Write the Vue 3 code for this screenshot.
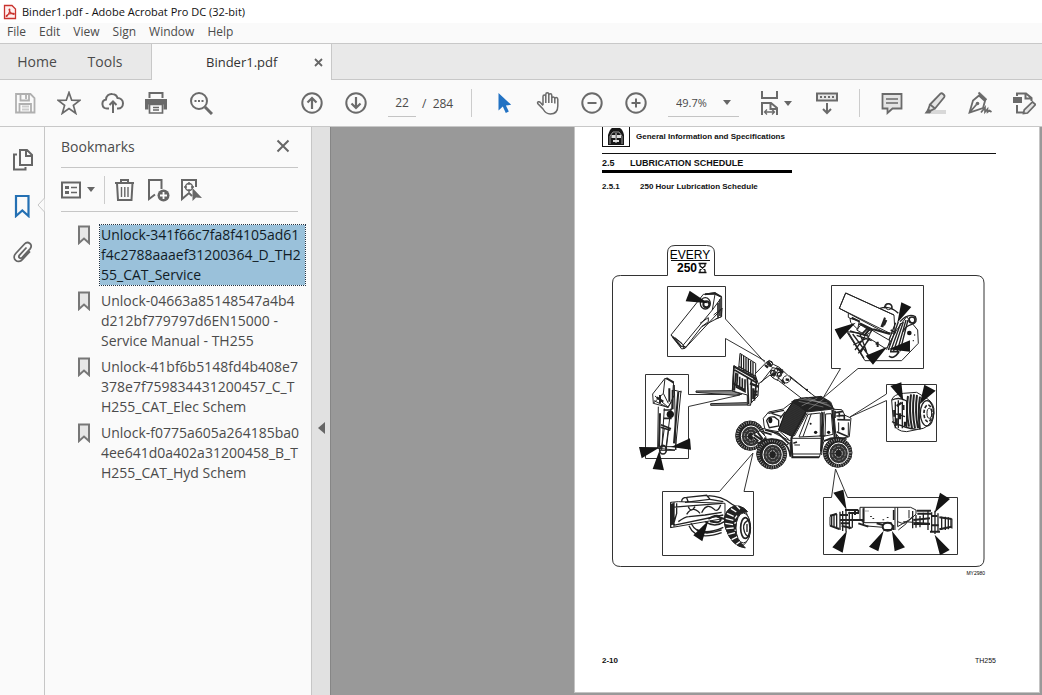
<script setup>
import { ref } from 'vue'

const menus = ['File', 'Edit', 'View', 'Sign', 'Window', 'Help']
const page = ref('22')
const zoom = ref('49.7%')
const selected = ref(0)
const bookmarks = [
  ['Unlock-341f66c7fa8f4105ad61', 'f4c2788aaaef31200364_D_TH2', '55_CAT_Service'],
  ['Unlock-04663a85148547a4b4', 'd212bf779797d6EN15000 -', 'Service Manual - TH255'],
  ['Unlock-41bf6b5148fd4b408e7', '378e7f759834431200457_C_T', 'H255_CAT_Elec Schem'],
  ['Unlock-f0775a605a264185ba0', '4ee641d0a402a31200458_B_T', 'H255_CAT_Hyd Schem']
]
const wheels = [
  { x: 180, y: 287, rx: 39, ry: 40 },
  { x: 245, y: 342, rx: 41, ry: 41 },
  { x: 443, y: 338, rx: 39, ry: 40 }
]
</script>

<template>
  <div class="app">
    <header class="titlebar">
      <svg class="logo" width="14" height="16" viewBox="0 0 14 16" aria-hidden="true">
        <path d="M1.5 1.5h7.500l3.500 3.500v9.500h-11z" fill="#fff0ef" stroke="#c9332e" stroke-width="1.300" />
        <path d="M6.500 5c-1.500 0 .8 4.500 3.700 5.300 1.500.4 1.500-.8 0-.9-2.300-.1-5.500.8-6.800 2.200-.8 1 .3 1.400 1 .2C5.600 10.200 7.700 5.300 6.500 5z" fill="none" stroke="#c9332e" stroke-width="1.100" />
      </svg>
      <span>Binder1.pdf - Adobe Acrobat Pro DC (32-bit)</span>
    </header>

    <nav class="menubar" aria-label="Menu">
      <button v-for="m in menus" :key="m" type="button">{{ m }}</button>
    </nav>

    <div class="tabs">
      <button type="button" class="tab home">Home</button>
      <button type="button" class="tab tools">Tools</button>
      <div class="doc-tab">
        <button type="button" class="doc-name">Binder1.pdf</button>
        <button type="button" class="close-tab" aria-label="Close tab">
          <svg width="9" height="9" viewBox="0 0 9 9"><path d="M1 1l7 7M8 1l-7 7" stroke="#666" stroke-width="1.800" /></svg>
        </button>
      </div>
    </div>

    <div class="toolbar">
      <div class="group">
        <button type="button" class="tool" aria-label="Save">
          <svg viewBox="0 0 24 24" class="ico pale">
            <path d="M3 3h14.500l4 4v14.500h-18.500zM7.500 3v6.500h8.500v-6.500M13 4v4M6.500 21v-8h11.500v8" />
            <path d="M9 15.500h7M9 18.500h7" class="thin" />
          </svg>
        </button>
        <button type="button" class="tool" aria-label="Star">
          <svg viewBox="0 0 24 24" class="ico"><path d="M12 1.500l2.700 7.700 8.100.2-6.400 5 2.300 7.900-6.700-4.700-6.700 4.700 2.300-7.900-6.400-5 8.100-.2z" stroke-width="1.700" /></svg>
        </button>
        <button type="button" class="tool" aria-label="Upload">
          <svg viewBox="0 0 24 24" class="ico"><path d="M8 17.500H6a4.500 4.500 0 0 1-1-8.900c0-3.600 3-6 6.300-5.600 2.600.2 4.500 1.600 5.200 4 3 .1 5.500 2 5.500 5.200 0 3-2 5.300-5 5.300h-1M12 22V10.500M8.500 14l3.500-3.500 3.500 3.500" stroke-width="2" /></svg>
        </button>
        <button type="button" class="tool" aria-label="Print">
          <svg viewBox="0 0 24 24" class="ico">
            <path d="M4.500 7V2h13v5" />
            <path d="M0 8h22v10.500h-3.500v-5h-15v5H0z" fill="#6a6a6a" stroke="none" />
            <path d="M4.500 13.500h13v8.500h-13zM8 16.500h6M8 19h6" stroke-width="1.700" />
          </svg>
        </button>
        <button type="button" class="tool" aria-label="Search">
          <svg viewBox="0 0 24 24" class="ico">
            <circle cx="10" cy="10" r="8" />
            <path d="M16 16l7 7" stroke-width="3" />
            <path d="M5.500 10h2M9 10h2M12.500 10h2" />
          </svg>
        </button>
      </div>

      <div class="group nav">
        <button type="button" class="tool" aria-label="Previous page">
          <svg viewBox="0 0 24 24" class="ico"><circle cx="12" cy="12" r="9.700" /><path d="M12 18V7M7.500 11.500L12 7l4.500 4.500" stroke-width="2.200" /></svg>
        </button>
        <button type="button" class="tool" aria-label="Next page">
          <svg viewBox="0 0 24 24" class="ico"><circle cx="12" cy="12" r="9.700" /><path d="M12 6v11M7.500 12.500L12 17l4.500-4.500" stroke-width="2.200" /></svg>
        </button>
      </div>
      <label class="pages"><input v-model="page" aria-label="Page number"><span>/&nbsp; 284</span></label>
      <span class="rule"></span>

      <div class="group view">
        <button type="button" class="tool" aria-label="Select">
          <svg viewBox="0 0 24 24" class="ico"><path d="M6.500 2v17.500l4.300-3.900 3 6.300 3-1.400-2.900-6 5.300-.7z" fill="#2272c3" stroke="none" /></svg>
        </button>
        <button type="button" class="tool" aria-label="Pan">
          <svg viewBox="0 0 24 24" class="ico"><path d="M7 14V5.500c0-2 2.800-2 2.800 0v-2c0-2.300 3-2.300 3 0v2-1c0-2.200 3-2.200 3 0v3c0-2 3-2 3 .2V8c0-2 3-1.800 3 .2V15c0 5-2.500 8-7.500 8-4 0-5.600-2-7.300-5L1.700 12.500c-.7-1.700 1.500-2.500 2.700-1L7 14.500M9.800 5.500V12M12.800 4v8M15.800 5v7M18.800 8v4.500" stroke-width="1.500" /></svg>
        </button>
        <button type="button" class="tool" aria-label="Zoom out">
          <svg viewBox="0 0 24 24" class="ico"><circle cx="12" cy="12" r="9.700" /><path d="M7.500 12h9" /></svg>
        </button>
        <button type="button" class="tool" aria-label="Zoom in">
          <svg viewBox="0 0 24 24" class="ico"><circle cx="12" cy="12" r="9.700" /><path d="M7.500 12h9M12 7.500v9" /></svg>
        </button>
      </div>
      <label class="zoom">
        <select v-model="zoom" aria-label="Zoom level"><option>49.7%</option><option>100%</option></select>
        <svg width="8" height="5" viewBox="0 0 8 5"><path d="M0 0h8L4 5z" fill="#666" /></svg>
      </label>
      <button type="button" class="fit" aria-label="Fit width">
        <svg viewBox="0 0 24 28" width="24" height="28" class="fit-ico">
          <path d="M4 2v7h15V2M4 26V14h9l6 5v7M12.500 14v6H19" />
          <path d="M7 23h9M9 20.500L6.500 23 9 25.500M14 20.500l2.500 2.500-2.500 2.500" class="thin" />
        </svg>
        <svg width="8" height="5" viewBox="0 0 8 5"><path d="M0 0h8L4 5z" fill="#666" /></svg>
      </button>
      <button type="button" class="tool keys" aria-label="Scroll mode">
        <svg viewBox="0 0 24 24" class="ico">
          <path d="M2 2.500h20v7H2z" fill="#e7e7e7" />
          <path d="M5 6h2M9 6h2M13 6h2M17 6h2M12 12v10M8 18l4 4 4-4" />
        </svg>
      </button>
      <span class="rule"></span>
      <div class="group comment">
        <button type="button" class="tool" aria-label="Comment">
          <svg viewBox="0 0 24 24" class="ico"><path d="M2.500 3h19v14.500h-9L7.500 22v-4.500h-5z" fill="#e4e4e4" stroke-width="1.800" /><path d="M6 8h12M6 12h12" stroke-width="1.500" /></svg>
        </button>
        <button type="button" class="tool" aria-label="Highlight">
          <svg viewBox="0 0 24 24" class="ico"><path d="M8 19h14v4H6z" fill="#d8d8d8" stroke="none" /><path d="M6 13.500L16.500 2.700c1.300-1.300 5 1.500 3.700 3.500L11 17.500zM6 13.500l-1.800 5 2 1.400 4.800-2.400" fill="#e4e4e4" stroke-width="1.800" /><path d="M3.700 18l3.800 2.800L6 22.500H.5z" fill="#6a6a6a" stroke="none" /></svg>
        </button>
        <button type="button" class="tool" aria-label="Sign document">
          <svg viewBox="0 0 24 24" class="ico"><path d="M12 1l7 6.500-2.500 2-6-6z" fill="#d8d8d8" stroke="none" /><path d="M11 4.500l6 5.500-2 7L1.500 21.500 5 9.500zM1.500 21.500l7-8M10.500 1.500l8 7.500" stroke-width="1.800" /><circle cx="9.500" cy="12.500" r="1.800" fill="#6a6a6a" stroke="none" /><path d="M13 21.500l4-5v4.500l2.500-3v3l2-1.500 2 1.500" stroke-width="1.700" /></svg>
        </button>
        <button type="button" class="tool" aria-label="Edit document">
          <svg viewBox="0 0 24 24" class="ico"><path d="M5 5V2.500h9l5.500 4.500v3M13.500 2.500v5h6M5 14v7.500h7" /><path d="M1 6h9v6H1z" fill="#6a6a6a" stroke="none" /><path d="M20.500 11l3 2.500-8 8.500-4 .5.700-3.500z" fill="#e4e4e4" stroke-width="1.700" /></svg>
        </button>
      </div>
    </div>

    <main class="workspace">
      <nav class="rail" aria-label="Panels">
        <button type="button" aria-label="Page thumbnails">
          <svg viewBox="0 0 22 24" width="22" height="24" class="line"><path d="M8 2h7l5 5v10H8zM14 2v6h6M5 6.500H2v15h11.500V19" /></svg>
        </button>
        <button type="button" class="current" aria-label="Bookmarks panel">
          <svg viewBox="0 0 22 24" width="22" height="24" class="line blue"><path d="M4 2h12.500v20l-6.200-5.500L4 22z" stroke-width="2.200" /></svg>
        </button>
        <button type="button" aria-label="Attachments">
          <svg viewBox="0 0 22 24" width="22" height="24" class="line"><path d="M14.500 7.500l-7 7.700c-1.700 2 .8 4.200 2.600 2.300l8-8.700c3.500-4.200-2.200-8.500-5.600-4.800L3.700 13.500c-4.500 5.300 2.200 11 6.800 5.800l7.500-8" stroke-width="1.800" /></svg>
        </button>
        <svg class="notch" width="8" height="16" viewBox="0 0 8 16"><path d="M7.500 0v1L1 8l6.500 7v1" fill="#fafafa" stroke="#c6c6c6" /></svg>
      </nav>

      <aside class="panel">
        <div class="panel-head">
          <h2>Bookmarks</h2>
          <button type="button" aria-label="Close panel"><svg width="14" height="14" viewBox="0 0 14 14"><path d="M1.500 1.500l11 11M12.500 1.500l-11 11" stroke="#666" stroke-width="2" /></svg></button>
        </div>
        <div class="panel-tools">
          <button type="button" class="options" aria-label="Options">
            <svg width="20" height="18" viewBox="0 0 20 18" class="line"><path d="M1 1.500h18v15H1z" /><path d="M4 6.500h4M4 11.500h4" stroke-width="3" /><path d="M10 6.500h6M10 11.500h6" stroke-width="1.500" /></svg>
            <svg width="8" height="5" viewBox="0 0 8 5"><path d="M0 0h8L4 5z" fill="#666" /></svg>
          </button>
          <span class="panel-rule"></span>
          <button type="button" aria-label="Delete bookmark">
            <svg width="22" height="24" viewBox="0 0 22 24" class="line"><path d="M1 5h19M7 5V2h7v3M3 5l1 17h13.500l1-17" /><path d="M7.500 9v10M10.800 9v10M14 9v10" stroke-width="1.400" /></svg>
          </button>
          <button type="button" aria-label="New bookmark">
            <svg width="24" height="24" viewBox="0 0 24 24" class="line"><path d="M9 16.500L3 21V2h12.500v9" /><circle cx="17.500" cy="17.500" r="6" fill="#666" stroke="none" /><path d="M14 17.500h7M17.500 14v7" stroke="#fff" stroke-width="1.800" /></svg>
          </button>
          <button type="button" aria-label="Find current bookmark">
            <svg width="22" height="24" viewBox="0 0 22 24" class="line"><path d="M16 9V2H2v19l7-6 3 3" /><circle cx="9" cy="9" r="3.500" stroke-width="1.500" /><path d="M9 4v3M9 11v3M4 9h3M11 9h3" stroke-width="1.400" /><path d="M12.500 10v13l3.500-3.500 6 .5z" fill="#666" stroke="none" /></svg>
          </button>
        </div>
        <ul class="bookmarks">
          <li v-for="(lines, i) in bookmarks" :key="i">
            <svg width="14" height="20" viewBox="0 0 14 20" aria-hidden="true"><path d="M2 1.500h10v16.500l-5-4.500-5 4.500z" fill="#e6e6e6" stroke="#777" stroke-width="2" /></svg>
            <button type="button" :class="{ active: i === selected }" @click="selected = i">
              <span v-for="line in lines" :key="line">{{ line }}</span>
            </button>
          </li>
        </ul>
      </aside>

      <button type="button" class="splitter" aria-label="Collapse panel">
        <svg width="7" height="12" viewBox="0 0 7 12"><path d="M7 0v12L0 6z" fill="#666" /></svg>
      </button>

      <section class="viewer">
        <article class="sheet">
          <header class="sheet-head">
            <span class="emblem">
              <svg width="18" height="18" viewBox="0 0 18 18"><path d="M1 17V7Q3 1 5 0h8q3 2 4 7v10z" fill="#171717" /><path d="M3 16V8l3-4h6l3 4v8" fill="none" stroke="#999" /><path d="M4.500 7h4v3h-4zM10 7h4v3h-4zM6 12h6v2H6z" fill="#ddd" /><path d="M9 5v10" stroke="#ddd" /></svg>
            </span>
            <span>General Information and Specifications</span>
          </header>
          <h3><span class="n">2.5</span>LUBRICATION SCHEDULE</h3>
          <h4><span class="n">2.5.1</span>250 Hour Lubrication Schedule</h4>

          <svg class="diagram" viewBox="602 240 394 340" role="img" aria-label="Lubrication points, every 250 hours">
            <defs>
              <pattern id="mesh" width="5" height="5" patternUnits="userSpaceOnUse" patternTransform="rotate(25)">
                <rect width="5" height="5" fill="#111" /><circle cx="2.500" cy="2.500" r="1.200" fill="#ddd" />
              </pattern>
            </defs>

            <!-- frame and tab -->
            <path d="M620.500 275.500H667.500V253Q667.500 245.500 675 245.500H706.500Q714.500 245.500 714.500 253V275.500H976Q984 275.500 984 283V559Q984 566.500 976 566.500H620.500Q612.500 566.500 612.500 559V283Q612.500 275.500 620.500 275.500Z" fill="none" stroke="#333" />
            <text x="690" y="259" text-anchor="middle" class="every">EVERY</text>
            <path d="M671 260.500H710" stroke="#111" />
            <text x="687" y="272" text-anchor="middle" class="hours">250</text>
            <path d="M698.500 263.500h8M698.500 272.500h8M700 264v2l5 4v2M705 264v2l-5 4v2" stroke="#111" stroke-width="1.300" fill="none" />
            <text x="985" y="575" text-anchor="end" class="fig">MY2980</text>

            <!-- callout boxes with their leader lines -->
            <g class="box">
              <path d="M765 362.500L725.500 319V286.500H667.500V356.500H725.500V338.500L765 361" />
              <path d="M740 395L688.500 406.500V458.500H645.500V374.500H688.500V394.500H740" />
              <path d="M753 453L719.500 491.500H662.500V555.500H753.500V491.500H744L753 453" />
              <path d="M823 398L840.500 368.500H831.500V285.500H923.500V368.500H858L823 398" />
              <path d="M850 417L886.500 394V384.500H936.500V441.500H886.500V400.500L850 417" />
              <path d="M835.500 469L831.500 497.500H823.500V554.500H957.500V497.500H847.500L835.500 469" />
            </g>

            <!-- boom cover detail -->
            <g transform="translate(605 240) scale(.3333)" class="art">
              <path d="M198 285L270 195L295 163L330 163L350 172V230L335 236L290 260L240 325L230 327Z" class="w" />
              <path d="M198 285L235 315L322 210L350 172M235 315V327M322 210L330 163M300 162L330 158L347 170M210 293L232 311M240 325L352 205M326 225L351 205L349 230L332 237M285 250L310 233V245L290 260" />
              <path d="M345 178v50M339 188v45M203 291L230 321M300 163l30 -4l20 12M232 318l10 4" stroke-width="5" />
              <ellipse cx="301" cy="190" rx="15" ry="17" stroke-width="4" /><circle cx="304" cy="193" r="9" stroke-width="6" />
              <path d="M254 152L242 184L310 190Z" class="b" />
            </g>

            <!-- fork cylinder detail -->
            <g transform="translate(605 370) scale(.3333)" class="art">
              <path d="M143 72L180 25L205 35L208 75L190 112L145 100Z" class="w" />
              <path d="M180 25L175 70L190 100M175 70L145 100M208 45L213 240M228 62L211 240M205 45L200 120M160 110L158 235L210 240M178 115L170 240M198 115L182 240M205 60L230 66M150 78L190 112M147 92L188 112L200 95" />
              <path d="M155 82L175 95M165 75V100M193 55V95M203 60V118M220 65L207 220M165 130L162 230M184 24L206 38" stroke-width="6" />
              <path d="M168 164L198 176M167 172L196 181M176 120H200M176 145H200" stroke-width="5" />
              <path d="M160 230H215M164 241H210M178 175L170 235M191 178L184 235" />
              <circle cx="196" cy="133" r="11" class="b" />
              <ellipse cx="174" cy="239" rx="10" ry="13" stroke-width="5" />
              <path d="M102 231L165 232L110 265Z M255 205L258 239L198 231Z M143 297L177 301L163 242Z" class="b" />
            </g>

            <!-- front axle detail -->
            <g transform="translate(605 370) scale(.3333)" class="art">
              <path d="M197 397L220 395L360 400V445L197 473Z" class="w" />
              <path d="M197 397V473M207 397V470M215 400V430L205 465M197 412L352 400M205 466L355 435M230 395Q230 382 245 382L305 376L315 388L240 397M245 383L250 397M310 377Q350 378 380 402L402 415M315 388L355 395M250 410Q258 430 270 410M245 433Q263 405 285 430M290 428Q305 395 330 420Q340 425 347 405M220 455Q240 440 252 440L300 435L350 427" stroke-width="4" />
              <path d="M199 402V465M204 400V464" stroke-width="6" />
              <path d="M258 460Q280 505 350 480M252 467Q272 515 350 488M274 478Q302 495 355 472M300 455Q330 475 358 455" stroke-width="4" />
              <path d="M310 447Q340 428 346 445T315 454M335 440L370 450" stroke-width="6" />
              <path d="M362 475C350 435 370 405 402 410Q430 420 435 465Q440 510 410 530Q380 525 362 475Z" class="w" />
              <path d="M362 475C350 435 370 405 402 408Q418 412 428 425Q400 425 396 470Q396 510 421 534Q380 530 362 475Z" fill="#222" />
              <path d="M366 430l20 9M362 445l23 6M361 460l23 4M364 476l22 -2M370 493l20 -5M380 509l18 -9M394 523l15 -11M378 416l16 10M395 408l10 10M390 445l6 -8M388 460l7 -3M389 480l7 3M394 500l8 3" stroke="#fff" stroke-width="4" />
              <ellipse cx="415" cy="474" rx="22" ry="45" class="w" /><ellipse cx="421" cy="474" rx="14" ry="31" stroke-width="5" /><path d="M434 450Q414 455 416 475Q420 500 434 500M426 462v24" stroke-width="4" />
              <path d="M310 452L265 496L292 514Z" class="b" />
            </g>

            <!-- boom pivot detail -->
            <g transform="translate(790 270) scale(.3333)" class="art">
              <path d="M167 69L312 135L315 190L285 188L148 115Z" class="w" />
              <path d="M148 115L167 69L312 135M148 115L300 190M175 130V142L210 160L300 225M200 160L245 178M170 185L225 272H335L385 220L383 180L350 140L320 180L290 235L220 190L170 185" />
              <path d="M175 188L222 265M188 192L235 255M200 196L245 212M190 225L244 198M205 250L240 205M180 183L240 200L212 248M195 240L225 200M210 192L230 245" stroke-width="4" />
              <path d="M325 155L295 240M332 160L302 244M340 156L310 246M348 150L321 246M354 150L330 244M317 158L288 233" stroke-width="4" />
              <path d="M212 165L245 185L228 196L200 180ZM245 180L300 212L290 238L235 203ZM180 145L208 153L203 178L182 157Z" class="w" />
              <path d="M240 176l-18 22M235 173l-18 18M185 143l24 12M210 160l40 20M250 178l50 14" stroke-width="6" />
              <path d="M330 155Q355 128 376 140Q385 158 365 163Q343 170 340 185M285 115Q282 101 296 101Q309 104 306 120M270 115Q300 105 325 130" stroke-width="4" />
              <circle cx="296" cy="110" r="9" stroke-width="3" /><circle cx="366" cy="150" r="9" stroke-width="5" />
              <path d="M285 143l-11 28M289 150l-7 16M273 167l8 2M263 215v16M257 221h8" stroke-width="6" />
              <circle cx="358" cy="189" r="7" class="b" /><circle cx="374" cy="195" r="2" class="b" /><circle cx="370" cy="212" r="2" class="b" />
              <path d="M302 180l15 8M300 245h28M297 258Q310 270 327 246" stroke-width="5" />
              <path d="M334 97L364 111L322 158Z M134 178L150 209L197 158Z M227 257L249 284L292 230Z M360 211V245L295 238Z" class="b" />
            </g>

            <!-- winch detail -->
            <g transform="translate(790 270) scale(.3333)" class="art">
              <path d="M305 390Q310 373 340 370L380 367L410 385Q435 400 432 430Q425 465 400 475L350 485Q315 485 310 455Z" class="w" />
              <path d="M306 390Q328 380 350 393V470M316 395V475M325 391V475M337 395V475M306 455Q345 475 380 478M312 430L345 440" stroke-width="4" />
              <g stroke-width="6"><path d="M354 378Q347 425 357 470M363 373Q356 425 366 475M372 373Q365 425 375 475M381 375Q374 425 384 475M390 380Q383 425 390 478" /></g>
              <ellipse cx="411" cy="430" rx="20" ry="38" stroke-width="4" /><ellipse cx="414" cy="430" rx="12" ry="25" stroke-width="5" stroke-dasharray="10 5" /><ellipse cx="418" cy="430" rx="7" ry="15" />
              <path d="M320 408L335 398M313 420v20M320 445v22M340 405v15M330 430v18M345 455v14" stroke-width="7" />
              <path d="M301 348L334 337L340 393Z M403 344L437 362L389 403Z" class="b" />
            </g>

            <!-- axle detail -->
            <g transform="translate(790 440) scale(.3333)" class="art">
              <path d="M120 230L135 220L160 213L210 213H435L455 230L485 235V265L450 275H420L380 260L320 270L280 268L220 260L170 272L120 255Z" fill="#fff" stroke="none" />
              <path d="M210 202H362L378 210V222L365 235L323 260V202M210 202V240L225 248H305M222 202V245M315 203V270M323 245Q350 260 366 230M357 210V235M190 240H220M325 270L350 250M340 245L420 250M230 258L280 262M120 230V257M120 229L140 220M486 236V266" />
              <path d="M150 215V270M158 213V273M168 210V275M178 215V268M187 218V263M125 227V258M132 225V260M140 222V262M368 213V265M378 225V263M390 228V262M400 218V255M414 212V270M425 217V275M435 212V282M444 220V275M455 230V270M466 230V270M475 232V268M483 236V264" stroke-width="4" />
              <path d="M120 227L140 222M120 257L148 267M165 210H205M175 219H207M150 240H220M155 258L185 264M195 208V225M205 250L235 260M380 212H423M382 221H425M370 240L420 235M370 252H420M420 275H450M448 232L485 237M448 268L485 260M150 225h24M152 250h26M424 228h18M424 256h22" stroke-width="6" />
              <path d="M205 210v8M228 212v2M234 212v2M243 228v3M250 234v3M280 238v3M293 231v3M311 210v30M220 205v50" stroke-width="5" />
              <ellipse cx="293" cy="260" rx="15" ry="12" stroke-width="6" /><path d="M260 250l19 5M280 270h25M310 255v15" stroke-width="6" />
              <path d="M130 158L160 149L170 210Z M450 158L480 177L434 218Z M127 322L158 338L171 272Z M237 320L265 334L281 272Z M306 273L345 322L314 334Z M434 284L479 330L450 346Z" class="b" />
            </g>

            <!-- telehandler -->
            <g transform="translate(690 340) scale(.3333)" class="art">
              <path d="M18 153L125 152L155 163L135 166L18 157ZM62 191L170 188L182 195L62 196Z" fill="#888" />
              <path d="M150 40L197 70V120L146 86Z" class="w" />
              <path d="M154 43v46M161 48v46M168 52v46M175 57v46M182 62v46M189 66v46M146 79L197 110" stroke-width="4" />
              <path d="M132 77L207 120L204 168L182 190V195H172V165L127 153Z" class="w" />
              <path d="M132 80L202 120M134 90L200 128M132 77L128 152M138 98L133 152M143 100L140 142L165 155V118M172 115L176 192M184 120L184 190M200 122L193 182M149 110V142M157 115V148M130 130L165 150" stroke-width="5" />
              <path d="M190 115l18 10M180 130l25 10M188 155h15M188 164h15M190 145v32" stroke-width="7" />
              <path d="M195 102L228 68L238 61L250 73L268 82L298 110L378 172L336 176L266 122L250 115L240 105L205 132Z" class="w" />
              <path d="M228 68L248 83L213 128M248 83L270 88M250 99L285 132M268 83L250 113M257 84L244 108M278 88L262 122M290 107Q275 110 280 127Q297 135 304 112M298 107L362 160" stroke-width="3" />
              <path d="M235 66l9 12M225 75l9 8M268 90l12 8M256 99l-10 8M275 119l7 10M287 118l10 2M258 84l16 8" stroke-width="7" />
              <circle cx="240" cy="71" r="8" /><circle cx="249" cy="98" r="7" stroke-width="4" /><circle cx="268" cy="103" r="6" stroke-width="4" /><circle cx="351" cy="149" r="3" class="b" />

              <path d="M222 255L220 235L236 216L280 207L305 188L320 215L265 275L225 268Z" class="w" />
              <path d="M230 242Q235 228 253 231L266 241V258L238 263ZM235 220L282 211M245 220L275 230M270 235L286 215" stroke-width="4" />
              <ellipse cx="241" cy="241" rx="6" ry="9" class="b" />
              <path d="M313 180L393 169L422 186L436 220L440 295L402 303L388 352H308L298 300L265 270L290 215Z" class="w" />
              <path d="M313 180L350 211L307 290L266 270L282 225Z" fill="url(#mesh)" stroke="#111" stroke-width="3" />
              <path d="M305 185L336 174L393 170L420 187L430 207L350 216L330 200Z" fill="#222" />
              <path d="M328 177L412 189M340 174L419 196M353 173L424 201M326 184L400 201M382 174L335 198M401 177L356 208" stroke="#aaa" stroke-width="1.500" />
              <path d="M354 223L391 219V288L327 291ZM407 222L424 221L429 283L405 288ZM364 221L339 290M303 295H398M300 300L302 350M308 342H390M395 215L401 302M403 215L395 345M432 205L435 290M352 219L313 288M313 315H330" />
              <path d="M347 218L304 295L307 352H387M398 217L393 335M427 210L434 292" stroke-width="6" />
              <circle cx="377" cy="277" r="5" class="b" /><circle cx="416" cy="277" r="5" class="b" /><circle cx="362" cy="251" r="3" class="b" /><path d="M310 310l11 -4M389 288h16" stroke-width="5" />
              <path d="M431 208L455 209L465 226L483 234L478 290L450 296L437 280Z" class="w" />
              <path d="M436 218L460 214M439 228L465 226M442 239L480 240M435 212v22M448 214v18M463 229v13M440 275L475 290" stroke-width="5" />
              <circle cx="459" cy="266" r="5" class="b" /><path d="M475 247v40M446 247v28" />
              <path d="M194 265Q225 260 260 283L305 305L290 315L230 300L197 288Z" class="w" />
              <path d="M201 270L245 284M205 281L230 310M225 270L265 280L296 310M200 295h30M208 263v30M197 292L230 309" stroke-width="5" />
              <g v-for="(w, i) in wheels" :key="i">
                <ellipse :cx="w.x" :cy="w.y" :rx="w.rx + 4" :ry="w.ry + 4" fill="#222" />
                <ellipse :cx="w.x" :cy="w.y" :rx="w.rx - 1" :ry="w.ry - 1" stroke="#aaa" stroke-width="8" stroke-dasharray="2 5" />
                <ellipse :cx="w.x + 3" :cy="w.y + 2" rx="29" ry="31" fill="#333" stroke="#fff" stroke-width="3" />
                <ellipse :cx="w.x + 3" :cy="w.y + 2" rx="20" ry="21" stroke="#888" stroke-width="3" stroke-dasharray="9 4" />
                <ellipse :cx="w.x + 3" :cy="w.y + 2" rx="11" ry="12" fill="#222" stroke="#bbb" stroke-width="3" stroke-dasharray="6 3" />
              </g>
              <path d="M185 285l25 -13l17 18l-15 20l-22 -10z" class="w" />
              <path d="M192 284l26 18M203 277l15 20M190 292l15 12" stroke-width="6" />
              <path d="M203 312Q235 288 275 303Q298 318 301 350M402 303Q435 286 470 298" stroke-width="5" />
            </g>
          </svg>

          <footer class="sheet-foot"><b>2-10</b><span>TH255</span></footer>
        </article>
      </section>
    </main>
  </div>
</template>

<style>
body { margin: 0; }
</style>

<style scoped>
.app {
  display: flex;
  flex-direction: column;
  height: 100vh;
  overflow: hidden;
  background: #fafafa;
  color: #4b4b4b;
  font-family: "Open Sans", "Noto Sans", sans-serif;
  font-size: 14px;
}
* { box-sizing: border-box; }
button, input, select { font: inherit; color: inherit; border: 0; background: none; padding: 0; margin: 0; }
svg { display: block; flex: none; }
.titlebar { display: flex; align-items: center; gap: 5px; height: 23px; padding-left: 3px; background: #fff; color: #111; font-size: 11px; flex: none; }
.menubar { display: flex; gap: 13px; height: 20px; padding-left: 7px; font-size: 12px; line-height: 18px; align-items: flex-start; flex: none; }
.tabs { display: flex; height: 37px; background: #e9e9e9; border-top: 1px solid #c8c8c8; border-bottom: 1px solid #c8c8c8; flex: none; }
.tab { font-size: 14px; }
.home { width: 74px; }
.tools { width: 62px; }
.doc-tab { display: flex; align-items: center; justify-content: space-between; width: 181px; margin: 0 0 -1px 15px; padding: 0 8px 0 54px; background: #fafafa; border: solid #c8c8c8; border-width: 0 1px; }
.doc-name { font-size: 13px; color: #333; }
.toolbar { display: flex; align-items: center; height: 47px; padding-left: 11px; border-bottom: 1px solid #c8c8c8; overflow: hidden; flex: none; }
.group { display: flex; gap: 16px; flex: none; }
.tool { width: 28px; height: 28px; display: grid; place-items: center; flex: none; }
.ico { width: 24px; height: 24px; fill: none; stroke: #6a6a6a; stroke-width: 2; }
.pale { stroke: #b0b0b0; stroke-width: 1.8; }
.ico .thin { stroke: #ccc; }
.nav { margin-left: 83px; }
.pages { display: flex; align-items: center; gap: 6px; margin-left: 18px; font-size: 12px; width: 83px; flex: none; }
.pages input { width: 28px; height: 28px; text-align: center; border-bottom: 1px solid #c4c4c4; }
.rule { width: 1px; height: 28px; background: #ccc; flex: none; }
.view { margin-left: 18px; }
.zoom { display: flex; align-items: center; margin-left: 18px; padding: 0 8px; width: 71px; height: 28px; border-bottom: 1px solid #c4c4c4; flex: none; }
.zoom select { appearance: none; flex: 1; font-size: 11px; }
.fit { display: flex; align-items: center; gap: 2px; margin-left: 19px; flex: none; }
.fit-ico { fill: none; stroke: #6a6a6a; stroke-width: 2; }
.fit-ico .thin { stroke-width: 1.3; }
.keys { margin: 0 18px 0 21px; }
.comment { margin-left: 18px; }
.workspace { display: flex; flex: 1; min-height: 0; }
.rail { position: relative; display: flex; flex-direction: column; align-items: flex-start; gap: 22px; width: 45px; padding: 21px 0 0 12px; border-right: 1px solid #c6c6c6; flex: none; }
.rail button { width: 24px; height: 24px; }
.line { fill: none; stroke: #666; stroke-width: 2; }
.blue { stroke: #2470b3; }
.notch { position: absolute; right: -1px; top: 70px; }
.panel { width: 267px; padding: 0 6px 0 16px; border-right: 1px solid #c6c6c6; flex: none; }
.panel-head { display: flex; align-items: center; justify-content: space-between; height: 41px; margin-right: 7px; padding: 0 8px 2px 0; border-bottom: 1px solid #c6c6c6; }
.panel-head h2 { margin: 0; font-size: 14px; font-weight: 400; }
.panel-tools { display: flex; align-items: center; gap: 10px; height: 44px; margin-right: 7px; border-bottom: 1px solid #c6c6c6; }
.options { display: flex; align-items: center; gap: 6px; }
.panel-rule { width: 1px; height: 28px; background: #ccc; margin: 0 -1px; }
.bookmarks { list-style: none; margin: 0; padding: 13px 0 0 16px; display: grid; gap: 6px; }
.bookmarks li { display: flex; align-items: flex-start; gap: 9px; }
.bookmarks button { text-align: left; line-height: 20px; width: 205px; white-space: nowrap; padding-left: 1px; }
.bookmarks button span { display: block; }
.bookmarks .active { background: #9ac1da; color: #111c26; outline: 1px dotted #234; }
.splitter { width: 18px; background: #e1e1e1; display: flex; align-items: center; justify-content: center; padding-top: 33px; flex: none; }
.viewer { flex: 1; min-width: 0; display: grid; grid-template-columns: 243fr 466fr 2fr; background: #999; border-left: 1px solid #868686; overflow: hidden; }
.sheet { grid-column: 2; display: flex; flex-direction: column; margin-bottom: 2px; padding: 0 43px 0 27px; background: #fff; border: 1px solid #c4c4c4; border-top: 0; color: #111; font-family: "Liberation Sans", Arial, sans-serif; }
.sheet-head { display: flex; gap: 6px; height: 27px; border-bottom: 1px solid #111; font-size: 8px; font-weight: 700; line-height: 19px; }
.emblem { display: grid; place-items: center; width: 28px; height: 20px; border: 1px solid #111; border-top: 0; }
h3, h4 { margin: 0; }
h3 { width: 190px; height: 19px; border-bottom: 3px solid #000; font-size: 9px; line-height: 18px; }
h3 .n { display: inline-block; width: 28px; }
h4 { font-size: 8px; line-height: 28px; }
h4 .n { display: inline-block; width: 38px; }
.diagram { width: 100%; height: auto; margin-top: 39px; }
.box path { fill: none; stroke: #333; stroke-width: 1; }
.art { fill: none; stroke: #222; stroke-width: 3; }
.art .w { fill: #fff; }
.art .b { fill: #151515; stroke: none; }
.every { font-size: 12px; }
.hours { font-size: 12px; font-weight: 700; }
.fig { font-size: 5px; }
.sheet-foot { display: flex; justify-content: space-between; margin: auto 0 26px; font-size: 8px; line-height: 10px; }
.sheet-foot span { font-size: 7px; }
</style>
